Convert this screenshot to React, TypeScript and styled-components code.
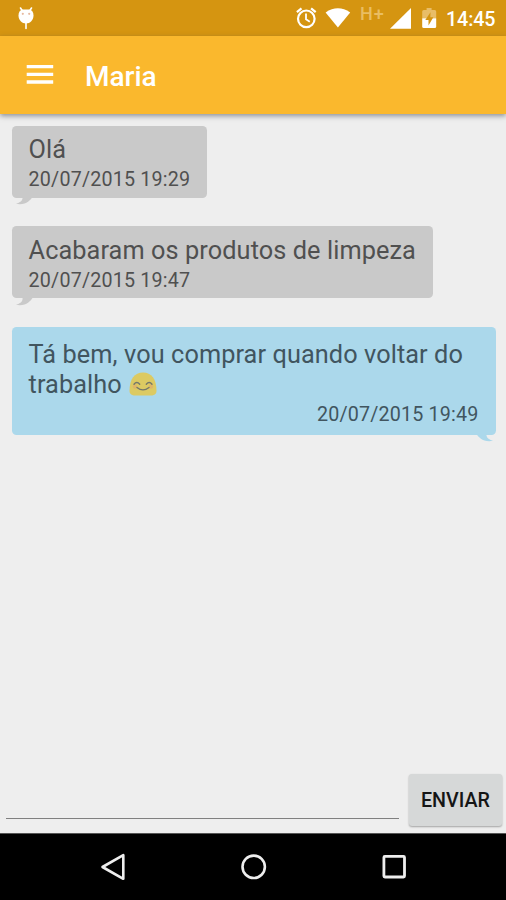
import React from 'react';
import styled, { createGlobalStyle } from 'styled-components';

const Global = createGlobalStyle`
  * { box-sizing: border-box; }
  html, body { margin: 0; padding: 0; background: #eee; }
  body { font-family: Roboto, "Noto Sans", sans-serif; overflow: hidden; }
`;

const Screen = styled.div`
  width: 506px;
  height: 900px;
  display: flex;
  flex-direction: column;
  background: #eeeeee;
`;

const StatusBar = styled.header`
  flex: none;
  height: 36px;
  display: flex;
  align-items: flex-start;
  justify-content: space-between;
  background: #d59511;
`;

const StatusGlyph = styled.svg`
  display: block;
  flex: none;
`;

const StatusIcons = styled.div`
  display: flex;
  align-items: flex-start;
  padding-right: 10px;
`;

const Clock = styled.time`
  width: 50px;
  margin-left: 8px;
  padding-top: 8px;
  font-size: 19.7px;
  line-height: 23px;
  font-weight: 500;
  letter-spacing: -0.1px;
  color: #fff;
  white-space: nowrap;
`;

const Network = styled.span`
  width: 29px;
  margin-left: 7px;
  padding-top: 5px;
  font-size: 18px;
  line-height: 18px;
  font-weight: 500;
  letter-spacing: 1px;
  color: #e9bd62;
`;

const AppBar = styled.div`
  flex: none;
  height: 78px;
  display: flex;
  align-items: center;
  padding-left: 26px;
  background: #fab82d;
  box-shadow: 0 2px 5px rgba(60, 70, 80, 0.55);
  z-index: 1;
`;

const MenuButton = styled.button`
  width: 28px;
  height: 22px;
  margin: 0 31px 0 0;
  padding: 0;
  border: 0;
  background: none;
  svg { display: block; }
`;

const Title = styled.h1`
  margin: 3px 0 0;
  font-size: 28px;
  line-height: 33px;
  font-weight: 500;
  letter-spacing: 0;
  color: #fff;
`;

const Conversation = styled.main`
  flex: 1;
  display: flex;
  flex-direction: column;
  align-items: flex-start;
  padding: 11.6px 10.5px 0 11.6px;
`;

const Bubble = styled.article<{ $own?: boolean }>`
  position: relative;
  width: ${p => (p.$own ? '100%' : 'auto')};
  height: ${p => (p.$own ? '108px' : '72px')};
  margin-bottom: 28.6px;
  padding: ${p => (p.$own ? '13.6px 17px 0' : '9.8px 17px 0')};
  border-radius: 4.5px;
  background: ${p => (p.$own ? '#abd8eb' : '#c9c9c9')};
  color: ${p => (p.$own ? '#41555f' : '#505050')};
`;

const Message = styled.p`
  margin: 0;
  font-size: 25.3px;
  line-height: 29.5px;
  letter-spacing: 0.08px;
  white-space: pre;
`;

const Stamp = styled.time<{ $own?: boolean }>`
  display: block;
  margin-top: 3.6px;
  font-size: 19.7px;
  line-height: 23px;
  letter-spacing: 0.18px;
  text-align: ${p => (p.$own ? 'right' : 'left')};
  white-space: nowrap;
`;

const Tail = styled.svg<{ $own?: boolean }>`
  position: absolute;
  top: calc(100% - 0.5px);
  ${p => (p.$own ? 'right: 2px; transform: scaleX(-1);' : 'left: 3px;')}
`;

const Emoji = styled.svg`
  display: inline-block;
  vertical-align: -3px;
  margin-left: 1px;
`;

const Composer = styled.form`
  flex: none;
  height: 59px;
  display: flex;
  align-items: flex-start;
  padding: 0 3px 0 6px;
`;

const Field = styled.input`
  width: 393px;
  height: 45px;
  margin: 0 10px 0 0;
  padding: 0 4px;
  border: 0;
  border-bottom: 1.5px solid #808080;
  outline: 0;
  background: transparent;
  font: 25px Roboto, sans-serif;
`;

const Send = styled.button`
  width: 93px;
  height: 52px;
  padding: 1px 0 0;
  border: 0;
  border-radius: 3px;
  background: #d6d8d8;
  box-shadow: 0 1px 2px rgba(0, 0, 0, 0.32);
  font: 500 19.7px/23px Roboto, sans-serif;
  color: #151515;
`;

const NavBar = styled.nav`
  flex: none;
  height: 67px;
  display: flex;
  align-items: center;
  justify-content: space-between;
  padding: 0 98px 0 99px;
  border-top: 1px solid #555;
  background: #000;
`;

const BubbleTail = ({ own }: { own?: boolean }) => (
  <Tail $own={own} width="18" height="8" viewBox="0 0 18 8">
    <path d="M7.5 0H17.5C15 3.5 11 8.5 1 6.8C5.5 5.6 8 3.5 7.5 0Z" fill={own ? '#abd8eb' : '#c9c9c9'} />
  </Tail>
);

const Smile = () => (
  <Emoji width="28" height="24" viewBox="0 0 28 24">
    <path d="M0.5 19C0.5 7 5.5 0.5 14 0.5S27.5 7 27.5 19C27.5 22 25 23.5 22 23.5H6C3 23.5 0.5 22 0.5 19Z" fill="#dcca62" />
    <circle cx="6" cy="14.5" r="2.2" fill="#dfb568" />
    <circle cx="22" cy="14.5" r="2.2" fill="#dfb568" />
    <path d="M5 12.2Q7.8 8.7 10.7 12.2M17.3 12.2Q20.2 8.7 23 12.2M8 15.5Q14 20.3 20 15.5" fill="none" stroke="#74776a" strokeWidth="1.4" strokeLinecap="round" />
  </Emoji>
);

const Debug = () => (
  <StatusGlyph width="44" height="36" viewBox="0 0 44 36">
    <path d="M20.5 8L22.5 11M31.5 8L29.5 11M26 22V28.5" stroke="#fff" strokeWidth="1.6" strokeLinecap="round" />
    <path d="M18.5 15.5Q18.5 10.5 22.5 9.5H29.5Q33.5 10.5 33.5 15.5C33.5 20 30 23.5 26 23.5S18.5 20 18.5 15.5Z" fill="#fff" />
    <circle cx="22.8" cy="13.8" r="1.1" fill="#e6b9a0" />
    <circle cx="29.2" cy="13.8" r="1.1" fill="#e6b9a0" />
  </StatusGlyph>
);

const Alarm = () => (
  <StatusGlyph width="23" height="36" viewBox="0 0 23 36">
    <g fill="none" stroke="#fff" strokeWidth="2.2">
      <circle cx="10.3" cy="18.8" r="8.3" />
      <path d="M0.9 12.2L5.5 8.4M19.7 12.2L15.1 8.4" />
      <path d="M10 13.5V19.2L13.8 21.8" strokeWidth="1.8" />
    </g>
  </StatusGlyph>
);

const Wifi = () => (
  <StatusGlyph width="34" height="36" viewBox="0 0 34 36">
    <path d="M6.6 12.4Q18.9 4 31.2 12.4L18.9 27.6Z" fill="#fff" />
  </StatusGlyph>
);

const Signal = () => (
  <StatusGlyph width="24" height="36" viewBox="0 0 24 36">
    <path d="M1 28.7H22V8Z" fill="#fff" />
  </StatusGlyph>
);

const Battery = () => (
  <StatusGlyph width="25" height="36" viewBox="0 0 25 36">
    <path d="M10.8 10H13.6V8H18.6V10H21.7Q23.2 10 23.2 11.5V18H9.2V11.5Q9.2 10 10.8 10Z" fill="#e8bd68" />
    <path d="M9.2 18.3H23.2V26.5Q23.2 28 21.7 28H10.7Q9.2 28 9.2 26.5Z" fill="#fff" />
    <path d="M17.5 12.3L12.3 20H15.5V25.5L20.3 17.3H17.3Z" fill="#d59511" />
  </StatusGlyph>
);

const received = [
  { text: 'Olá', at: '20/07/2015 19:29' },
  { text: 'Acabaram os produtos de limpeza', at: '20/07/2015 19:47' },
];

export default function App() {
  return (
    <Screen>
      <Global />
      <StatusBar>
        <Debug />
        <StatusIcons>
          <Alarm />
          <Wifi />
          <Network>H+</Network>
          <Signal />
          <Battery />
          <Clock>14:45</Clock>
        </StatusIcons>
      </StatusBar>
      <AppBar>
        <MenuButton aria-label="Menu">
          <svg width="28" height="22" viewBox="0 0 28 22">
            <path d="M0.7 2.6H27.2M0.7 10.4H27.2M0.7 18H27.2" stroke="#fff" strokeWidth="3.4" />
          </svg>
        </MenuButton>
        <Title>Maria</Title>
      </AppBar>
      <Conversation>
        {received.map(m => (
          <Bubble key={m.at}>
            <Message>{m.text}</Message>
            <Stamp>{m.at}</Stamp>
            <BubbleTail />
          </Bubble>
        ))}
        <Bubble $own>
          <Message>
            {'Tá bem, vou comprar quando voltar do\ntrabalho '}
            <Smile />
          </Message>
          <Stamp $own>20/07/2015 19:49</Stamp>
          <BubbleTail own />
        </Bubble>
      </Conversation>
      <Composer onSubmit={e => e.preventDefault()}>
        <Field aria-label="Mensagem" />
        <Send>ENVIAR</Send>
      </Composer>
      <NavBar>
        <svg width="28" height="30" viewBox="0 0 28 30">
          <path d="M3.5 15L24.3 3.2V26.8Z" fill="none" stroke="#eee" strokeWidth="2.6" strokeLinejoin="round" />
        </svg>
        <svg width="28" height="28" viewBox="0 0 28 28">
          <circle cx="13.7" cy="13.8" r="11.2" fill="none" stroke="#eee" strokeWidth="2.6" />
        </svg>
        <svg width="28" height="28" viewBox="0 0 28 28">
          <rect x="3.9" y="3.4" width="20.6" height="20.6" rx="1" fill="none" stroke="#eee" strokeWidth="2.8" />
        </svg>
      </NavBar>
    </Screen>
  );
}
